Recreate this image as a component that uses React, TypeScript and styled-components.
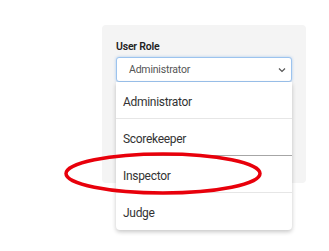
import styled, { createGlobalStyle } from "styled-components";

const GlobalStyle = createGlobalStyle`
  body {
    margin: 0;
    background: #ffffff;
    font-family: Roboto, "Liberation Sans", sans-serif;
  }
`;

const Page = styled.div`
  position: relative;
  width: 329px;
  height: 251px;
  padding: 25px 0 0 102px;
  box-sizing: border-box;
`;

const Panel = styled.div`
  width: 204px;
  height: 158px;
  box-sizing: border-box;
  padding: 16px 14px;
  background: #f4f4f4;
  border-radius: 4px;
  display: flex;
  flex-direction: column;
  gap: 4px;
`;

const Label = styled.div`
  font-size: 10.5px;
  font-weight: 600;
  letter-spacing: -0.2px;
  line-height: 12px;
  color: #222;
`;

const SelectWrap = styled.div`
  position: relative;
  width: 176px;
`;

const SelectBox = styled.div`
  height: 25px;
  box-sizing: border-box;
  border: 1px solid #9cc3ee;
  border-radius: 3px;
  background: #fff;
  box-shadow: 0 0 3px rgba(80, 150, 230, 0.45);
  display: flex;
  align-items: center;
  justify-content: space-between;
  padding: 0 5px 0 12px;
  font-size: 10.5px;
  letter-spacing: -0.2px;
  color: #555;
`;

const Menu = styled.ul`
  position: absolute;
  top: 100%;
  left: 0;
  width: 176px;
  margin: 0;
  padding: 0;
  list-style: none;
  background: #fff;
  border-radius: 0 0 4px 4px;
  box-shadow: 0 2px 4px rgba(0, 0, 0, 0.22);
`;

const Item = styled.li<{ $dark?: boolean; $last?: boolean }>`
  height: 37px;
  box-sizing: border-box;
  display: flex;
  align-items: center;
  padding: 3px 0 0 7px;
  font-size: 12px;
  letter-spacing: -0.3px;
  color: #333;
  border-bottom: 1px solid ${(p) => (p.$last ? "transparent" : p.$dark ? "#a6a6a6" : "#e6e6e6")};
`;

const Circle = styled.svg`
  position: absolute;
  left: 63px;
  top: 151px;
`;

export default function App() {
  const roles = ["Administrator", "Scorekeeper", "Inspector", "Judge"];
  return (
    <Page>
      <GlobalStyle />
      <Panel>
        <Label>User Role</Label>
        <SelectWrap>
          <SelectBox>
            <span>Administrator</span>
            <svg width="8" height="6" viewBox="0 0 8 6">
              <path d="M1 1.5 L4 4.5 L7 1.5" stroke="#555" strokeWidth="1.2" fill="none" />
            </svg>
          </SelectBox>
          <Menu>
            {roles.map((r, i) => (
              <Item key={r} $dark={i === 1} $last={i === roles.length - 1}>
                {r}
              </Item>
            ))}
          </Menu>
        </SelectWrap>
      </Panel>
      <Circle width="202" height="46" viewBox="0 0 202 46">
        <ellipse cx="100" cy="22.5" rx="97" ry="19.5" fill="none" stroke="#e8000b" strokeWidth="3.5" />
      </Circle>
    </Page>
  );
}
